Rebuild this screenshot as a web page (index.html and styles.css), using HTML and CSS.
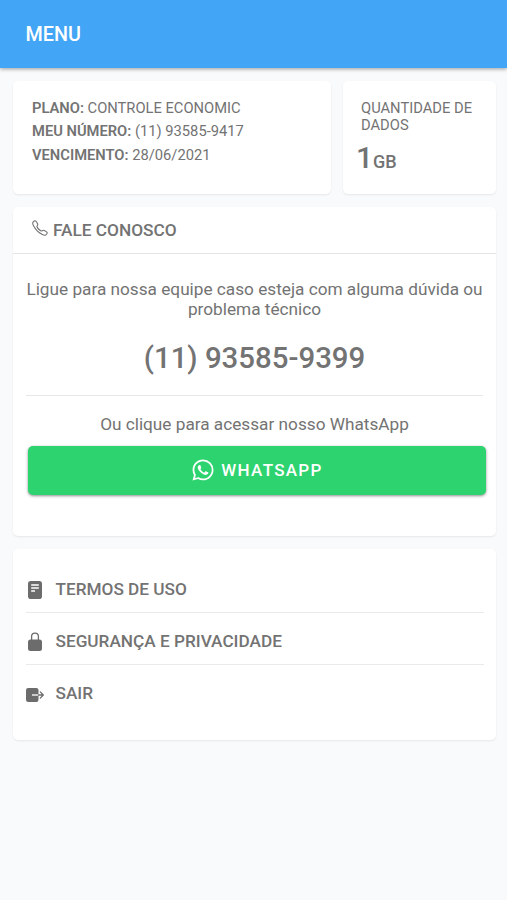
FILE: index.html
```html
<!DOCTYPE html>
<html lang="pt-BR">
<head>
<meta charset="utf-8">
<title>Menu</title>
<link rel="stylesheet" href="styles.css">
</head>
<body>
<header class="toolbar"><h1>MENU</h1></header>
<main class="content">
  <div class="summary">
    <section class="card plan">
      <p><b>PLANO:</b> CONTROLE ECONOMIC</p>
      <p><b>MEU NÚMERO:</b> (11) 93585-9417</p>
      <p><b>VENCIMENTO:</b> 28/06/2021</p>
    </section>
    <section class="card data">
      <p class="data-label">QUANTIDADE DE DADOS</p>
      <p class="data-value">1<span>GB</span></p>
    </section>
  </div>
  <section class="card contact">
    <h2 class="contact-title">
      <svg class="call" viewBox="0 0 512 512"><path d="M451 374c-15.88-16-54.34-39.35-73-48.76-24.3-12.24-26.3-13.24-45.4.95-12.74 9.47-21.21 17.93-36.12 14.75s-47.31-21.11-75.68-49.39-47.34-61.62-50.53-76.48 5.41-23.23 14.79-36c13.22-18 12.22-21 .92-45.3-8.81-18.9-32.84-57-48.9-72.8C119.9 44 119.9 47 108.83 51.6A160.15 160.15 0 0083 65.37C67 76 58.12 84.83 51.91 98.1s-9 44.38 23.07 102.64 54.57 88.05 101.14 134.49S258.5 406.64 310.85 436c64.76 36.27 89.6 29.2 102.91 23s22.18-15 32.83-31a159.09 159.09 0 0013.8-25.8C465 391.17 468 391.17 451 374z"/></svg>
      <span>FALE CONOSCO</span>
    </h2>
    <div class="contact-body">
      <p class="hint">Ligue para nossa equipe caso esteja com alguma dúvida ou problema técnico</p>
      <p class="phone">(11) 93585-9399</p>
      <p class="alt">Ou clique para acessar nosso WhatsApp</p>
      <button class="whatsapp" type="button">
        <svg viewBox="0 0 512 512"><path fill-rule="evenodd" d="M414.73 97.1A222.14 222.14 0 00256.94 32C134 32 33.92 131.58 33.87 254a220.61 220.61 0 0029.78 111L32 480l118.25-30.87a223.63 223.63 0 00106.6 27h.09c122.93 0 223-99.59 223.06-222A220.18 220.18 0 00414.73 97.1zM256.94 438.66h-.08a185.75 185.75 0 01-94.36-25.72l-6.77-4-70.17 18.32 18.73-68.09-4.41-7A183.46 183.46 0 0171.53 254c0-101.73 83.21-184.5 185.48-184.5a185 185 0 01185.33 184.64c-.04 101.74-83.21 184.52-185.4 184.52zm101.69-138.19c-5.57-2.78-33-16.2-38.08-18.05s-8.83-2.78-12.54 2.78-14.4 18-17.65 21.75-6.5 4.16-12.07 1.38-23.54-8.63-44.83-27.53c-16.57-14.71-27.75-32.87-31-38.42s-.35-8.56 2.44-11.32c2.51-2.49 5.57-6.48 8.36-9.72s3.72-5.56 5.57-9.26.93-6.94-.46-9.71-12.54-30.08-17.18-41.19c-4.53-10.82-9.12-9.35-12.54-9.52-3.25-.16-7-.2-10.69-.2a20.53 20.53 0 00-14.86 6.94c-5.11 5.56-19.51 19-19.51 46.28s20 53.68 22.76 57.38 39.3 59.73 95.21 83.76a323.11 323.11 0 0031.78 11.68c13.35 4.22 25.5 3.63 35.1 2.2 10.71-1.59 33-13.42 37.63-26.38s4.64-24.06 3.25-26.37-5.11-3.71-10.69-6.48z"/></svg>
        <span>WHATSAPP</span>
      </button>
    </div>
  </section>
  <nav class="card menu">
    <a class="item">
      <svg viewBox="0 0 20 20"><rect x="3" y="1" width="14" height="18" rx="2.8"/><path class="cut" d="M6.2 5h7.6M6.2 8h7.6M6.2 11h3.8"/></svg>
      <span>TERMOS DE USO</span>
    </a>
    <a class="item">
      <svg viewBox="0 0 20 20"><rect x="3" y="7.6" width="14" height="11.4" rx="2.5"/><path class="line" d="M6.6 8V4.6a3.4 3.4 0 0 1 6.8 0V8"/></svg>
      <span>SEGURANÇA E PRIVACIDADE</span>
    </a>
    <a class="item">
      <svg viewBox="0 0 20 20"><rect x="1" y="3" width="12.5" height="14" rx="2.2"/><path class="cut" d="M7 10h6.5"/><path class="line" d="M13.5 10h4.7M15.3 6.9l3 3.1-3 3.1"/></svg>
      <span>SAIR</span>
    </a>
  </nav>
</main>
</body>
</html>
```
FILE: styles.css
```css
* { box-sizing: border-box; }
body {
  margin: 0;
  min-height: 900px;
  background: #f8fafc;
  color: #737373;
  font-family: Roboto, "Liberation Sans", sans-serif;
}
h1, h2, p { margin: 0; }
.toolbar {
  display: flex;
  align-items: center;
  height: 68px;
  padding: 0 25.5px;
  background: #42a5f5;
  box-shadow: 0 1px 4px rgba(0, 0, 0, .38);
}
.toolbar h1 {
  color: #fff;
  font-size: 19.8px;
  font-weight: 500;
}
.content {
  display: flex;
  flex-direction: column;
  gap: 13px;
  padding: 13px 11px 0 13px;
}
.card {
  background: #fff;
  border-radius: 5px;
  box-shadow: 0 1px 2px rgba(0, 0, 0, .08);
}
.summary {
  display: grid;
  grid-template-columns: 318px 153px;
  gap: 12px;
  height: 113px;
}
.plan {
  padding: 16px 19px;
  font-size: 14.73px;
  line-height: 23.4px;
}
.plan b { font-weight: 600; }
.data { padding: 18px 18px 0; }
.data-label {
  padding-top: 1px;
  font-size: 14.73px;
  line-height: 17px;
}
.data-value {
  margin: 8px 0 0 -5px;
  font-size: 30px;
  font-weight: 500;
  line-height: 32px;
}
.data-value span { font-size: 18px; }
.contact { height: 329px; width: 483px; }
.contact-title {
  display: flex;
  align-items: center;
  height: 47px;
  padding-left: 19px;
  border-bottom: 1px solid #e4e5e6;
  font-size: 17.25px;
  font-weight: 500;
}
.contact-title svg {
  width: 18px;
  height: 18px;
  margin: -4px 4px 0 -1px;
  fill: none;
  stroke: currentColor;
  stroke-width: 32;
}
.contact-body {
  padding: 25px 13px 0 13px;
  text-align: center;
  font-size: 17.22px;
}
.hint { line-height: 20px; }
.phone {
  height: 77px;
  padding-top: 19px;
  border-bottom: 1px solid #e6e7e8;
  font-size: 29.4px;
  font-weight: 500;
  line-height: 40px;
}
.alt {
  margin-top: 18px;
  line-height: 21px;
}
.whatsapp {
  display: flex;
  align-items: center;
  justify-content: center;
  gap: 6px;
  width: 458px;
  height: 49px;
  margin: 11px 0 0 2px;
  padding: 0 0 2px;
  border: 0;
  border-radius: 5px;
  background: #2dd36f;
  color: #fff;
  font: 500 17px Roboto, sans-serif;
  letter-spacing: 1.3px;
  box-shadow: 0 1px 3px rgba(0, 0, 0, .45);
}
.whatsapp svg {
  width: 24px;
  height: 24px;
  fill: currentColor;
}
.menu {
  width: 483px;
  height: 191px;
  padding: 12px 12px 0 13px;
}
.item {
  display: flex;
  align-items: center;
  gap: 10.5px;
  height: 52px;
  padding-top: 6px;
  border-bottom: 1px solid #e9eaeb;
  font-size: 17.22px;
  font-weight: 500;
}
.item span { padding-bottom: 2px; }
.item:last-child { border-bottom: 0; }
.item svg {
  width: 20px;
  height: 20px;
  margin: 1px 0 0 -1px;
  fill: #6c6c6c;
}
.item .cut, .item .line {
  fill: none;
  stroke-width: 1.3;
}
.item .cut { stroke: #fff; }
.item .line { stroke: #6c6c6c; stroke-linecap: round; stroke-linejoin: round; }
```
